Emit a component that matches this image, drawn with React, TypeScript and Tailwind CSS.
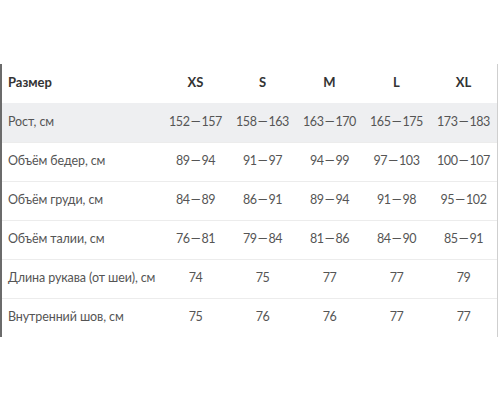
import React from "react";

const sizes = ["XS", "S", "M", "L", "XL"];
const rows: [string, string[]][] = [
  ["Рост, см", ["152 — 157", "158 — 163", "163 — 170", "165 — 175", "173 — 183"]],
  ["Объём бедер, см", ["89 — 94", "91 — 97", "94 — 99", "97 — 103", "100 — 107"]],
  ["Объём груди, см", ["84 — 89", "86 — 91", "89 — 94", "91 — 98", "95 — 102"]],
  ["Объём талии, см", ["76 — 81", "79 — 84", "81 — 86", "84 — 90", "85 — 91"]],
  ["Длина рукава (от шеи), см", ["74", "75", "77", "77", "79"]],
  ["Внутренний шов, см", ["75", "76", "76", "77", "77"]],
];

export default function App() {
  return (
    <div
      className="w-[500px] h-[400px] bg-white flex items-center"
      style={{ fontFamily: "Lato, sans-serif" }}
    >
      <div className="w-[498px] border-l-2 border-l-[#6b6b6b] border-r border-r-[#cfcfcf]">
        <div className="grid grid-cols-[160px_repeat(5,67px)] h-[39px] items-center text-[13px] font-bold text-[#333]">
          <div className="pl-[6px]">Размер</div>
          {sizes.map((s) => (
            <div key={s} className="text-center">{s}</div>
          ))}
        </div>
        {rows.map(([label, vals], i) => (
          <div
            key={label}
            className={`grid grid-cols-[160px_repeat(5,67px)] h-[39px] items-center text-[12.5px] text-[#555] ${
              i === 0 ? "bg-[#eeeff1]" : "border-t border-t-[#ececec]"
            }`}
          >
            <div className="pl-[6px] whitespace-nowrap tracking-[-0.1px]">{label}</div>
            {vals.map((v, j) => (
              <div key={j} className="text-center whitespace-nowrap tracking-[-0.4px]">
                {v.replace(/ — /g, "\u2009—\u2009")}
              </div>
            ))}
          </div>
        ))}
      </div>
    </div>
  );
}
